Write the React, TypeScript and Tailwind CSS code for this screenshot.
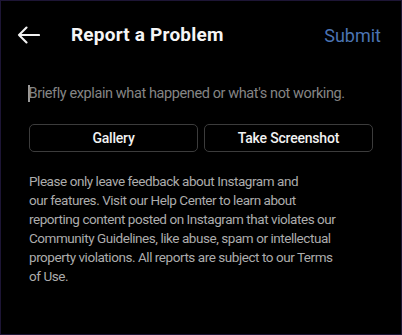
import React from 'react';

const lines = [
  'Please only leave feedback about Instagram and',
  'our features. Visit our Help Center to learn about',
  'reporting content posted on Instagram that violates our',
  'Community Guidelines, like abuse, spam or intellectual',
  'property violations. All reports are subject to our Terms',
  'of Use.',
];

const App: React.FC = () => (
  <div
    className="w-[402px] h-[335px] bg-black border border-[#1d1535] overflow-hidden"
    style={{ fontFamily: 'Roboto, "Noto Sans", sans-serif' }}
  >
    <div className="flex items-center h-[68px] pl-[16px] pr-[20px]">
      <svg width="23" height="18" viewBox="0 0 23 18" fill="none" stroke="#f2f2f2" strokeWidth="2.1" strokeLinecap="round" strokeLinejoin="round">
        <path d="M2 9h20M9.5 1.5L2 9l7.5 7.5" />
      </svg>
      <h1 className="ml-[31px] text-[19px] font-bold text-[#f5f5f5] tracking-[0.2px]">Report a Problem</h1>
      <span className="ml-auto text-[18px] text-[#4b74b3]">Submit</span>
    </div>
    <div className="flex items-center h-[49px] pl-[27px]">
      <span className="w-[1.5px] h-[17px] bg-[#9a9a9a]" />
      <span className="whitespace-nowrap text-[14.5px] tracking-[-0.4px] text-[#858585] -ml-[1px]">
        Briefly explain what happened or what's not working.
      </span>
    </div>
    <div className="flex gap-[6px] px-[28px] mt-[6px]">
      <button className="flex-1 h-[28px] rounded-[5px] border border-[#3c3c3c] text-[14px] tracking-[-0.2px] font-medium text-[#f2f2f2]">Gallery</button>
      <button className="flex-1 h-[28px] rounded-[5px] border border-[#3c3c3c] text-[14px] tracking-[-0.2px] font-medium text-[#f2f2f2]">Take Screenshot</button>
    </div>
    <div className="mt-[20px] px-[28px] text-[13.5px] tracking-[-0.45px] leading-[19px] text-[#acacac]">
      {lines.map((l) => (
        <p key={l} className="whitespace-nowrap">{l}</p>
      ))}
    </div>
  </div>
);

export default App;
